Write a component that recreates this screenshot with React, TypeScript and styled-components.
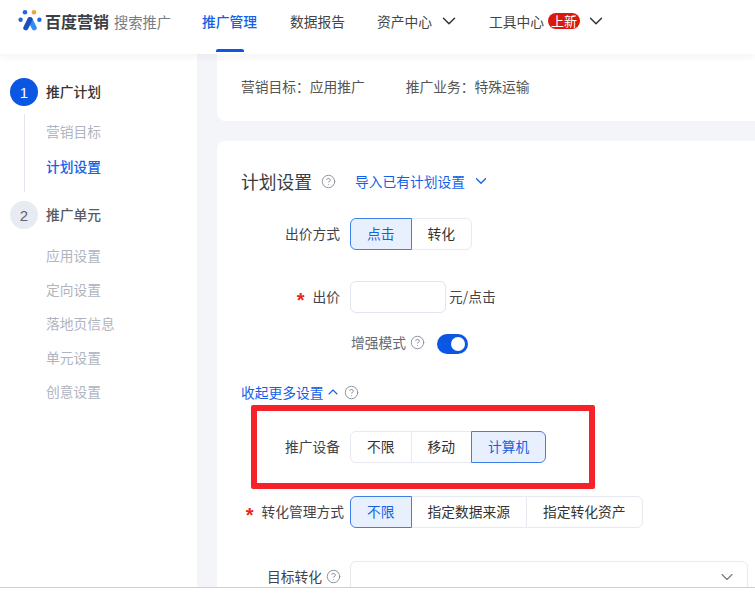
import React, { FC } from 'react';
import styled, { createGlobalStyle } from 'styled-components';
import { ChevronDown, ChevronUp, CircleHelp } from 'lucide-react';

const GlobalStyle = createGlobalStyle`
  html, body {
    margin: 0;
    padding: 0;
    background: #fff;
  }
  body {
    font-family: "Noto Sans CJK SC", "Noto Sans", sans-serif;
    font-size: 13.75px;
    color: #333;
  }
`;

const Page = styled.div`
  width: 755px;
  height: 593px;
  overflow: hidden;
  display: grid;
  grid-template-rows: 54px 1fr 6px;
`;

const Header = styled.header`
  position: relative;
  z-index: 2;
  display: flex;
  align-items: center;
  background: #fff;
  box-shadow: 0 2px 8px rgba(30, 40, 70, 0.06);
  padding-bottom: 12px;
  box-sizing: border-box;
`;

const LogoWrap = styled.div`
  display: flex;
  align-items: center;
  width: 202px;
  padding-left: 18px;
  box-sizing: border-box;
`;

const LogoText = styled.span`
  margin-left: 3px;
  font-size: 16px;
  font-weight: 700;
  color: #3b3f47;
  white-space: nowrap;
`;

const LogoSub = styled.span`
  margin-left: 5px;
  font-size: 14.25px;
  color: #777b84;
  white-space: nowrap;
`;

const NavItem = styled.div<{ $active?: boolean; $width: number }>`
  position: relative;
  display: flex;
  align-items: center;
  width: ${(p) => p.$width}px;
  color: ${(p) => (p.$active ? '#1561e6' : '#444')};
  font-weight: ${(p) => (p.$active ? 500 : 400)};
  white-space: nowrap;
  flex: none;
  &::after {
    content: '';
    display: ${(p) => (p.$active ? 'block' : 'none')};
    position: absolute;
    left: 14px;
    bottom: -21px;
    width: 28px;
    height: 3px;
    border-radius: 2px 2px 0 0;
    background: #0b57e3;
  }
`;

const Badge = styled.span`
  margin-left: 4px;
  width: 32px;
  height: 16px;
  border-radius: 8px;
  background: #d9190b;
  color: #fff;
  font-size: 13px;
  line-height: 16px;
  text-align: center;
`;

const NavChevron = styled(ChevronDown)<{ $gap: number }>`
  margin-left: ${(p) => p.$gap}px;
  color: #333;
`;

const Body = styled.div`
  display: grid;
  grid-template-columns: 197px 1fr;
  min-height: 0;
  background: #f4f5f9;
`;

const Sidebar = styled.aside`
  background: #fff;
  padding: 24px 0 0 10px;
`;

const Step = styled.div<{ $current?: boolean }>`
  display: flex;
  align-items: center;
  height: 28px;
  gap: 8px;
  font-weight: 500;
  color: ${(p) => (p.$current ? '#333' : '#555a64')};
`;

const StepLabel = styled.span`
  padding-bottom: 2px;
`;

const StepNumber = styled.span<{ $current?: boolean }>`
  width: 28px;
  height: 28px;
  border-radius: 50%;
  display: flex;
  align-items: center;
  justify-content: center;
  font-family: "Liberation Sans", sans-serif;
  font-size: 15px;
  background: ${(p) => (p.$current ? '#0b57e3' : '#e9ebf3')};
  color: ${(p) => (p.$current ? '#fff' : '#5c6270')};
`;

const SubList = styled.div<{ $connected?: boolean }>`
  margin: ${(p) => (p.$connected ? '8px 0 9px 14px' : '9px 0 0 14px')};
  padding: ${(p) => (p.$connected ? '0 0 8px 21px' : '0 0 0 22px')};
  border-left: ${(p) => (p.$connected ? '1px solid #e2e5ee' : 'none')};
`;

const SubItem = styled.div<{ $active?: boolean; $tall?: boolean }>`
  height: ${(p) => (p.$tall ? 35 : 34)}px;
  line-height: ${(p) => (p.$tall ? 35 : 34)}px;
  color: ${(p) => (p.$active ? '#1561e6' : '#b0b4bf')};
  font-weight: ${(p) => (p.$active ? 500 : 400)};
`;

const Main = styled.main`
  padding-left: 20px;
  min-height: 0;
  overflow: hidden;
`;

const SummaryCard = styled.section`
  height: 67px;
  padding: 22px 0 0 24px;
  box-sizing: border-box;
  background: #fff;
  border-radius: 0 0 0 8px;
  display: flex;
  gap: 41px;
  color: #555;
`;

const SettingsCard = styled.section`
  margin-top: 20px;
  padding: 28px 0 0 24px;
  height: 500px;
  box-sizing: border-box;
  background: #fff;
  border-radius: 8px 0 0 0;
`;

const TitleRow = styled.div<{ $top?: number }>`
  display: flex;
  align-items: center;
  height: 24px;
  margin-top: ${(p) => p.$top ?? 0}px;
`;

const Title = styled.h2`
  margin: 0;
  font-size: 17.75px;
  font-weight: 400;
  color: #3a3d44;
`;

const LinkText = styled.span<{ $left?: number }>`
  color: #1561e6;
  display: inline-flex;
  align-items: center;
  margin-left: ${(p) => p.$left ?? 0}px;
`;

const LinkChevronDown = styled(ChevronDown)`
  margin-left: 7px;
`;

const LinkChevronUp = styled(ChevronUp)`
  margin-left: 1px;
`;

const Help = styled(CircleHelp)<{ $left: number; $lift?: number }>`
  color: #8a8e98;
  flex: none;
  margin-left: ${(p) => p.$left}px;
  margin-bottom: ${(p) => p.$lift ?? 0}px;
`;

const FormRow = styled.div<{ $top: number }>`
  position: relative;
  display: flex;
  align-items: center;
  margin-top: ${(p) => p.$top}px;
  margin-left: -24px;
`;

const Label = styled.div<{ $gap?: number }>`
  width: ${(p) => 133 - (p.$gap ?? 10)}px;
  display: flex;
  align-items: center;
  justify-content: flex-end;
  margin-right: ${(p) => p.$gap ?? 10}px;
  padding-bottom: 2px;
  white-space: nowrap;
  color: #3f434b;
`;

const Star = styled.span`
  color: #e8251c;
  margin-right: 8px;
  padding-top: 7px;
  font-family: "Liberation Sans", sans-serif;
  font-weight: 700;
  font-size: 20px;
  line-height: 1;
`;

const Segments = styled.div`
  display: inline-flex;
  height: 32px;
`;

const Segment = styled.div<{ $selected?: boolean }>`
  position: relative;
  z-index: ${(p) => (p.$selected ? 1 : 0)};
  display: flex;
  align-items: center;
  padding: 0 16px 2px;
  box-sizing: border-box;
  margin-left: -1px;
  border: 1px solid ${(p) => (p.$selected ? '#3f7fea' : '#e8eaf2')};
  background: ${(p) => (p.$selected ? '#e8f0fd' : '#fff')};
  color: ${(p) => (p.$selected ? '#1561e6' : '#333')};
  white-space: nowrap;
  &:first-child {
    margin-left: 0;
    border-radius: 6px 0 0 6px;
  }
  &:last-child {
    border-radius: 0 6px 6px 0;
  }
`;

const NumberInput = styled.div`
  width: 96px;
  height: 32px;
  box-sizing: border-box;
  border: 1px solid #e2e5ef;
  border-radius: 6px;
`;

const Unit = styled.span`
  margin-left: 3px;
  padding-bottom: 2px;
  color: #3f434b;
`;

const EnhanceLabel = styled.span`
  margin-left: 1px;
  padding-bottom: 3px;
  color: #666a73;
`;

const Toggle = styled.div`
  margin-left: 12px;
  width: 31px;
  height: 20px;
  border-radius: 10px;
  background: #0b57e3;
  display: flex;
  align-items: center;
  justify-content: flex-end;
  padding-right: 3px;
  box-sizing: border-box;
  &::after {
    content: '';
    width: 14px;
    height: 14px;
    border-radius: 50%;
    background: #fff;
  }
`;

const Annotation = styled.div`
  position: absolute;
  left: 34px;
  top: -26px;
  width: 344px;
  height: 84px;
  box-sizing: border-box;
  border: 6px solid #f5222a;
  border-radius: 2px;
  pointer-events: none;
`;

const SelectBox = styled.div`
  width: 398px;
  height: 32px;
  box-sizing: border-box;
  border: 1px solid #e8eaf2;
  border-radius: 6px;
  display: flex;
  align-items: center;
  justify-content: flex-end;
  padding-right: 10px;
  color: #777;
`;

const BottomStrip = styled.div`
  position: relative;
  z-index: 2;
  background: #fff;
  border-top: 1px solid #cfcfd2;
`;

const Logo: FC = () => (
  <svg width="24" height="24" viewBox="0 0 24 24" aria-hidden="true">
    <circle cx="7" cy="3.2" r="2.3" fill="#1f66e5" />
    <circle cx="16" cy="3.2" r="2.3" fill="#f0a43a" />
    <circle cx="2.6" cy="10.8" r="2.2" fill="#1f66e5" />
    <circle cx="21.4" cy="10.8" r="2.2" fill="#1f66e5" />
    <path d="M12 10.500 L16.200 18.800" stroke="#2f8ef0" strokeWidth="5" strokeLinecap="round" />
    <path d="M12 10.500 L7.800 18.800" stroke="#1a4fc4" strokeWidth="5" strokeLinecap="round" />
  </svg>
);

const subItemsTwo = ['应用设置', '定向设置', '落地页信息', '单元设置', '创意设置'];

export default function App() {
  return (
    <>
      <GlobalStyle />
      <Page>
        <Header>
          <LogoWrap>
            <Logo />
            <LogoText>百度营销</LogoText>
            <LogoSub>搜索推广</LogoSub>
          </LogoWrap>
          <NavItem $active $width={88}>推广管理</NavItem>
          <NavItem $width={87}>数据报告</NavItem>
          <NavItem $width={112}>
            资产中心
            <NavChevron $gap={6} size={22} strokeWidth={1.6} />
          </NavItem>
          <NavItem $width={130}>
            工具中心
            <Badge>上新</Badge>
            <NavChevron $gap={5} size={22} strokeWidth={1.6} />
          </NavItem>
        </Header>
        <Body>
          <Sidebar>
            <Step $current>
              <StepNumber $current>1</StepNumber>
              <StepLabel>推广计划</StepLabel>
            </Step>
            <SubList $connected>
              <SubItem $tall>营销目标</SubItem>
              <SubItem $tall $active>计划设置</SubItem>
            </SubList>
            <Step>
              <StepNumber>2</StepNumber>
              <StepLabel>推广单元</StepLabel>
            </Step>
            <SubList>
              {subItemsTwo.map((item) => (
                <SubItem key={item}>{item}</SubItem>
              ))}
            </SubList>
          </Sidebar>
          <Main>
            <SummaryCard>
              <span>营销目标：应用推广</span>
              <span>推广业务：特殊运输</span>
            </SummaryCard>
            <SettingsCard>
              <TitleRow>
                <Title>计划设置</Title>
                <Help $left={9} size={15} strokeWidth={1.5} />
                <LinkText $left={19}>
                  导入已有计划设置
                  <LinkChevronDown size={18} strokeWidth={1.7} />
                </LinkText>
              </TitleRow>
              <FormRow $top={25}>
                <Label>出价方式</Label>
                <Segments>
                  <Segment $selected>点击</Segment>
                  <Segment>转化</Segment>
                </Segments>
              </FormRow>
              <FormRow $top={31}>
                <Label>
                  <Star>*</Star>出价
                </Label>
                <NumberInput />
                <Unit>元/点击</Unit>
              </FormRow>
              <FormRow $top={19}>
                <Label />
                <EnhanceLabel>增强模式</EnhanceLabel>
                <Help $left={4} $lift={2} size={15} strokeWidth={1.5} />
                <Toggle />
              </FormRow>
              <TitleRow $top={25}>
                <LinkText>
                  收起更多设置
                  <LinkChevronUp size={16} strokeWidth={1.7} />
                </LinkText>
                <Help $left={3} size={15} strokeWidth={1.5} />
              </TitleRow>
              <FormRow $top={27}>
                <Label>推广设备</Label>
                <Segments>
                  <Segment>不限</Segment>
                  <Segment>移动</Segment>
                  <Segment $selected>计算机</Segment>
                </Segments>
                <Annotation />
              </FormRow>
              <FormRow $top={33}>
                <Label $gap={6}>
                  <Star>*</Star>转化管理方式
                </Label>
                <Segments>
                  <Segment $selected>不限</Segment>
                  <Segment>指定数据来源</Segment>
                  <Segment>指定转化资产</Segment>
                </Segments>
              </FormRow>
              <FormRow $top={33}>
                <Label $gap={9}>
                  目标转化
                  <Help $left={4} size={15} strokeWidth={1.5} />
                </Label>
                <SelectBox>
                  <ChevronDown size={20} strokeWidth={1.3} />
                </SelectBox>
              </FormRow>
            </SettingsCard>
          </Main>
        </Body>
        <BottomStrip />
      </Page>
    </>
  );
}
